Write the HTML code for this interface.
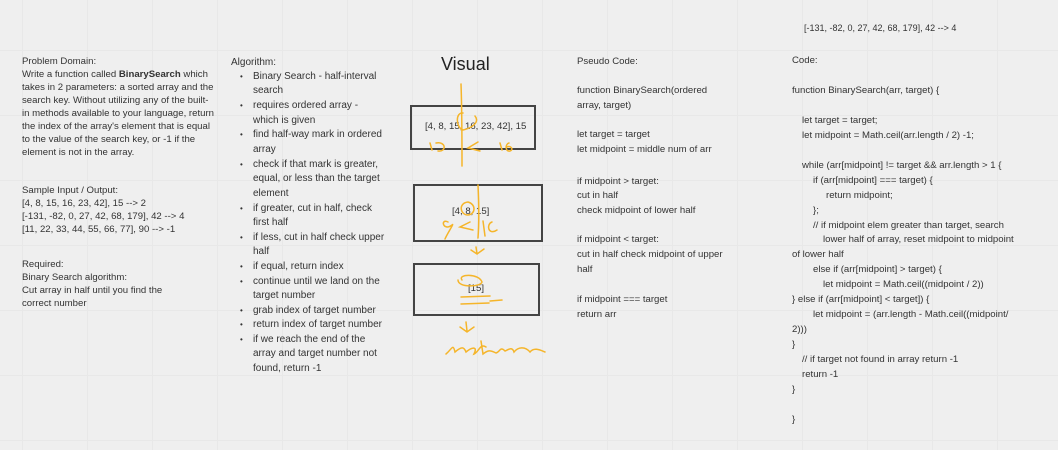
<!DOCTYPE html>
<html><head><meta charset="utf-8"><style>
html,body{margin:0;padding:0}
body{width:1058px;height:450px;overflow:hidden;position:relative;background-color:#efefef;
background-image:linear-gradient(#e8e8e8 1px,transparent 1px),linear-gradient(90deg,#e8e8e8 1px,transparent 1px);
background-size:65px 65px;background-position:22px 50px;
font-family:"Liberation Sans",sans-serif;font-size:9.6px;color:#333}
.t{position:absolute;white-space:nowrap;line-height:12px;transform:translateY(-6px)}
.b::before{content:"•";position:absolute;left:-13px;font-size:8px}
.box{position:absolute;border:2px solid #444;box-sizing:border-box}
</style></head><body>

<div class="t" style="left:22px;top:62px">Problem Domain:</div>
<div class="t" style="left:22px;top:75px">Write a function called <b>BinarySearch</b> which</div>
<div class="t" style="left:22px;top:88px">takes in 2 parameters: a sorted array and the</div>
<div class="t" style="left:22px;top:101px">search key. Without utilizing any of the built-</div>
<div class="t" style="left:22px;top:114px">in methods available to your language, return</div>
<div class="t" style="left:22px;top:127px">the index of the array's element that is equal</div>
<div class="t" style="left:22px;top:140px">to the value of the search key, or -1 if the</div>
<div class="t" style="left:22px;top:153px">element is not in the array.</div>
<div class="t" style="left:22px;top:191px">Sample Input / Output:</div>
<div class="t" style="left:22px;top:204px">[4, 8, 15, 16, 23, 42], 15 --&gt; 2</div>
<div class="t" style="left:22px;top:217px">[-131, -82, 0, 27, 42, 68, 179], 42 --&gt; 4</div>
<div class="t" style="left:22px;top:230px">[11, 22, 33, 44, 55, 66, 77], 90 --&gt; -1</div>
<div class="t" style="left:22px;top:265px">Required:</div>
<div class="t" style="left:22px;top:278px">Binary Search algorithm:</div>
<div class="t" style="left:22px;top:291px">Cut array in half until you find the</div>
<div class="t" style="left:22px;top:304px">correct number</div>

<div class="t" style="left:231px;top:63px;font-size:10px">Algorithm:</div>
<div style="font-size:10px">
<div class="t b" style="left:253px;top:77px">Binary Search - half-interval</div>
<div class="t" style="left:253px;top:91px">search</div>
<div class="t b" style="left:253px;top:106px">requires ordered array -</div>
<div class="t" style="left:253px;top:121px">which is given</div>
<div class="t b" style="left:253px;top:135px">find half-way mark in ordered</div>
<div class="t" style="left:253px;top:150px">array</div>
<div class="t b" style="left:253px;top:165px">check if that mark is greater,</div>
<div class="t" style="left:253px;top:179px">equal, or less than the target</div>
<div class="t" style="left:253px;top:194px">element</div>
<div class="t b" style="left:253px;top:209px">if greater, cut in half, check</div>
<div class="t" style="left:253px;top:223px">first half</div>
<div class="t b" style="left:253px;top:238px">if less, cut in half check upper</div>
<div class="t" style="left:253px;top:252px">half</div>
<div class="t b" style="left:253px;top:267px">if equal, return index</div>
<div class="t b" style="left:253px;top:282px">continue until we land on the</div>
<div class="t" style="left:253px;top:296px">target number</div>
<div class="t b" style="left:253px;top:311px">grab index of target number</div>
<div class="t b" style="left:253px;top:325px">return index of target number</div>
<div class="t b" style="left:253px;top:340px">if we reach the end of the</div>
<div class="t" style="left:253px;top:354px">array and target number not</div>
<div class="t" style="left:253px;top:369px">found, return -1</div>
</div>

<div class="t" style="left:441px;top:64px;font-size:18px;line-height:20px;transform:translateY(-10px);color:#222">Visual</div>
<div class="box" style="left:410px;top:105px;width:126px;height:45px"></div>
<div class="t" style="left:425px;top:127px">[4, 8, 15, 16, 23, 42], 15</div>
<div class="box" style="left:413px;top:184px;width:130px;height:58px"></div>
<div class="t" style="left:452px;top:212px">[4, 8, 15]</div>
<div class="box" style="left:413px;top:263px;width:127px;height:53px"></div>
<div class="t" style="left:468px;top:289px">[15]</div>
<svg style="position:absolute;left:0;top:0" width="1058" height="450" fill="none" stroke="#f5b52a" stroke-width="1.5" stroke-linecap="round">
<path d="M461 84 C462 110 462 140 462 166"/>
<path d="M463 113 C455 112 456 128 463 130 C472 128 480 122 475 116"/>
<path d="M430 143 L432 150 M436 143 C446 141 447 152 438 151"/>
<path d="M478 142 L468 148 L480 151"/>
<path d="M500 143 L502 150 M509 143 C505 144 505 152 510 151 C514 150 511 145 507 147"/>
<path d="M478 185 C479 205 479 225 478 238"/>
<path d="M468 202 C458 203 460 215 468 215 C476 214 476 204 468 202"/>
<path d="M448 222 C440 218 443 232 452 225 C455 222 447 234 445 239"/>
<path d="M470 222 L460 227 L473 230"/>
<path d="M483 221 L485 236 M492 222 C486 224 488 236 497 230"/>
<path d="M476 247 L477 254 M471 250 L477 254 L484 249"/>
<path d="M462 280 C457 274 479 273 482 282 C481 287 458 288 458 280"/>
<path d="M461 297 L490 296 M461 304 L489 303 M490 301 L502 300"/>
<path d="M466 322 L467 331 M460 327 L467 332 L474 327"/>
<path d="M446 354 C452 349 453 343 455 352 C462 346 464 347 466 352 C472 347 478 346 474 354 C479 352 480 343 486 347 M481 341 L483 354 C488 350 490 350 496 353 C500 352 500 346 505 351 C508 350 512 346 514 352 C518 347 525 346 530 352 C534 347 540 350 545 352"/>
</svg>

<div class="t" style="left:577px;top:62px">Pseudo Code:</div>
<div class="t" style="left:577px;top:91px">function BinarySearch(ordered</div>
<div class="t" style="left:577px;top:106px">array, target)</div>
<div class="t" style="left:577px;top:135px">let target = target</div>
<div class="t" style="left:577px;top:150px">let midpoint = middle num of arr</div>
<div class="t" style="left:577px;top:182px">if midpoint &gt; target:</div>
<div class="t" style="left:577px;top:196px">cut in half</div>
<div class="t" style="left:577px;top:211px">check midpoint of lower half</div>
<div class="t" style="left:577px;top:240px">if midpoint &lt; target:</div>
<div class="t" style="left:577px;top:255px">cut in half check midpoint of upper</div>
<div class="t" style="left:577px;top:270px">half</div>
<div class="t" style="left:577px;top:300px">if midpoint === target</div>
<div class="t" style="left:577px;top:315px">return arr</div>

<div class="t" style="left:804px;top:28px;font-size:9px">[-131, -82, 0, 27, 42, 68, 179], 42 --&gt; 4</div>
<div class="t" style="left:792px;top:61px">Code:</div>
<div class="t" style="left:792px;top:91px">function BinarySearch(arr, target) {</div>
<div class="t" style="left:802px;top:121px">let target = target;</div>
<div class="t" style="left:802px;top:136px">let midpoint = Math.ceil(arr.length / 2) -1;</div>
<div class="t" style="left:802px;top:166px">while (arr[midpoint] != target &amp;&amp; arr.length &gt; 1 {</div>
<div class="t" style="left:813px;top:181px">if (arr[midpoint] === target) {</div>
<div class="t" style="left:826px;top:196px">return midpoint;</div>
<div class="t" style="left:813px;top:211px">};</div>
<div class="t" style="left:813px;top:226px">// if midpoint elem greater than target, search</div>
<div class="t" style="left:823px;top:240px">lower half of array, reset midpoint to midpoint</div>
<div class="t" style="left:792px;top:255px">of lower half</div>
<div class="t" style="left:813px;top:270px">else if (arr[midpoint] &gt; target) {</div>
<div class="t" style="left:823px;top:285px">let midpoint = Math.ceil((midpoint / 2))</div>
<div class="t" style="left:792px;top:300px">} else if (arr[midpoint] &lt; target]) {</div>
<div class="t" style="left:813px;top:315px">let midpoint = (arr.length - Math.ceil((midpoint/</div>
<div class="t" style="left:792px;top:330px">2)))</div>
<div class="t" style="left:792px;top:345px">}</div>
<div class="t" style="left:802px;top:360px">// if target not found in array return -1</div>
<div class="t" style="left:802px;top:375px">return -1</div>
<div class="t" style="left:792px;top:390px">}</div>
<div class="t" style="left:792px;top:420px">}</div>
</body></html>
